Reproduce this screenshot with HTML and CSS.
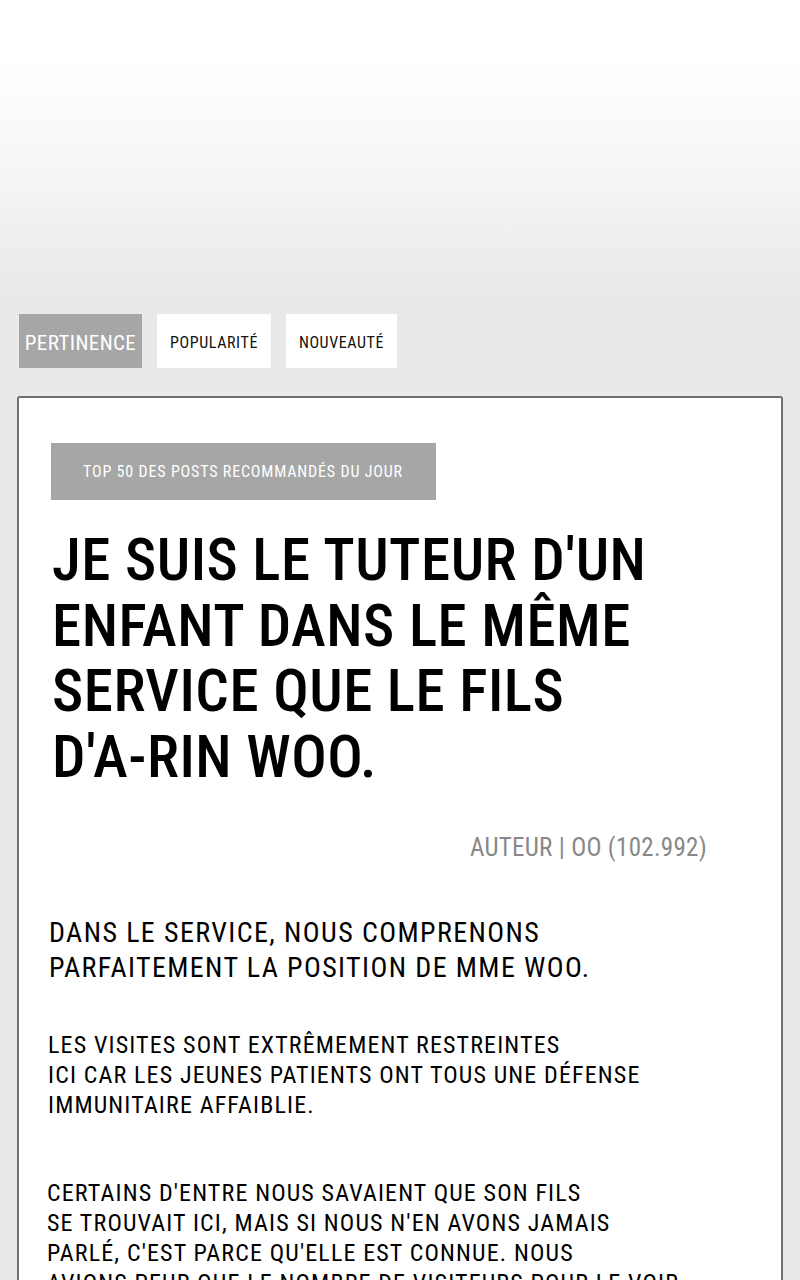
FILE: index.html
```html
<!DOCTYPE html>
<html lang="fr">
<head>
<meta charset="utf-8">
<title>Top 50</title>
<link rel="stylesheet" href="styles.css">
</head>
<body>
<div class="page">
  <div class="hero"></div>
  <nav class="tabs">
    <span class="tab tab-active">PERTINENCE</span>
    <span class="tab">POPULARITÉ</span>
    <span class="tab">NOUVEAUTÉ</span>
  </nav>
  <article class="card">
    <div class="badge">TOP 50 DES POSTS RECOMMANDÉS DU JOUR</div>
    <h1 class="title">JE SUIS LE TUTEUR D'UN<br>ENFANT DANS LE MÊME<br>SERVICE QUE LE FILS<br>D'A-RIN WOO.</h1>
    <div class="author">AUTEUR | OO (102.992)</div>
    <p class="para para-lead">DANS LE SERVICE, NOUS COMPRENONS<br>PARFAITEMENT LA POSITION DE MME WOO.</p>
    <p class="para para-2">LES VISITES SONT EXTRÊMEMENT RESTREINTES<br>ICI CAR LES JEUNES PATIENTS ONT TOUS UNE DÉFENSE<br>IMMUNITAIRE AFFAIBLIE.</p>
    <p class="para para-3">CERTAINS D'ENTRE NOUS SAVAIENT QUE SON FILS<br>SE TROUVAIT ICI, MAIS SI NOUS N'EN AVONS JAMAIS<br>PARLÉ, C'EST PARCE QU'ELLE EST CONNUE. NOUS<br>AVIONS PEUR QUE LE NOMBRE DE VISITEURS POUR LE VOIR<br>AUGMENTE.</p>
  </article>
</div>
</body>
</html>
```

FILE: styles.css
```css
* { box-sizing: border-box; }
html, body { margin: 0; padding: 0; }
body {
  background: #e9e9e9;
  font-family: "Roboto", "Liberation Sans Narrow", "DejaVu Sans", sans-serif;
  font-stretch: 75%;
  color: #000;
}
.page {
  width: 800px;
  height: 1280px;
  overflow: hidden;
  background: linear-gradient(to bottom, #ffffff 0px, #ffffff 60px, #f6f6f6 170px, #ececec 260px, #e9e9e9 300px, #e9e9e9 100%);
}
.hero { height: 314px; }
.tabs {
  display: flex;
  gap: 15px;
  padding-left: 19px;
  height: 54px;
}
.tab {
  display: flex;
  align-items: center;
  justify-content: center;
  background: #fff;
  color: #111;
  font-size: 16px;
  letter-spacing: 0.6px;
  padding: 2px 0 0;
}
.tab:nth-child(2) { width: 114px; }
.tab:nth-child(3) { width: 111px; }
.tab-active {
  background: #a6a6a6;
  color: #fff;
  font-size: 21px;
  letter-spacing: 0.4px;
  width: 123px;
  padding-top: 3px;
}
.card {
  margin: 28px 17px 0;
  background: #fff;
  border: 2px solid #707070;
  border-radius: 3px;
  padding: 45px 32px 40px;
  min-height: 900px;
}
.badge {
  display: inline-flex;
  align-items: center;
  height: 57px;
  width: 385px;
  padding-left: 32px;
  background: #a6a6a6;
  color: #fff;
  font-size: 16px;
  letter-spacing: 0.83px;
}
.title {
  margin: 27px 0 0 1px;
  font-size: 59px;
  line-height: 65.5px;
  font-weight: 500;
  letter-spacing: 0.5px;
}
.author {
  margin-top: 44px;
  padding-right: 42px;
  text-align: right;
  color: #888;
  font-size: 25px;
  line-height: 30px;
  letter-spacing: 0.3px;
}
.para { margin: 0; }
.para-lead {
  margin-top: 52px;
  font-size: 28px;
  line-height: 35px;
  letter-spacing: 1.4px;
  margin-left: -2px;
}
.para-2 {
  margin-top: 45px;
  font-size: 24px;
  line-height: 30px;
  letter-spacing: 1.15px;
  margin-left: -3px;
}
.para-3 {
  margin-top: 58px;
  font-size: 24px;
  line-height: 30px;
  letter-spacing: 1.15px;
  margin-left: -4px;
}
```
